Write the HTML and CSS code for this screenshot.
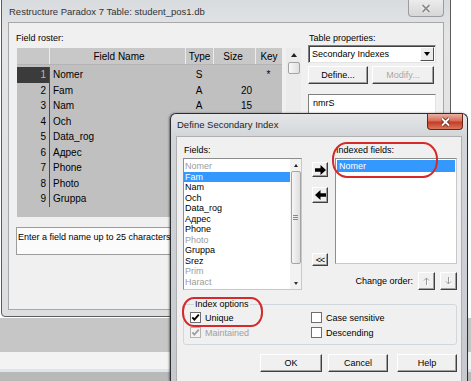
FILE: index.html
```html
<!DOCTYPE html>
<html lang="en">
<head>
    <meta charset="UTF-8">
    <meta name="viewport" content="width=device-width, initial-scale=1.0">
    <title>Restructure Paradox 7 Table</title>
    <link rel="stylesheet" href="styles.css">
</head>
<body>
    <!-- Background window: table restructure -->
    <div class="window back-window">
        <div class="titlebar">
            <span class="title">Restructure Paradox 7 Table: student_pos1.db</span>
            <span class="close inactive">
                <svg width="10" height="9" viewBox="0 0 10 9"><path d="M1.5 1 L8.5 8 M8.5 1 L1.5 8" stroke="#fff" stroke-width="3.2"/><path d="M1.5 1 L8.5 8 M8.5 1 L1.5 8" stroke="#8e8e8e" stroke-width="1.8"/></svg>
            </span>
        </div>
        <div class="client back-client">
            <div class="roster">
                <div class="label">Field roster:</div>
                <div class="grid-wrap">
                    <div class="fgrid">
                        <div class="frow head">
                            <div class="c-num"></div>
                            <div class="c-name">Field Name</div>
                            <div class="c-type">Type</div>
                            <div class="c-size">Size</div>
                            <div class="c-key">Key</div>
                        </div>
                        <!-- rows 4-9: type/size columns sit under the dialog -->
                        <div class="fbody">
                            <div class="frow cur"><div class="c-num">1</div><div class="c-name">Nomer</div><div class="c-type">S</div><div class="c-size"></div><div class="c-key">*</div></div>
                            <div class="frow"><div class="c-num">2</div><div class="c-name">Fam</div><div class="c-type">A</div><div class="c-size">20</div><div class="c-key"></div></div>
                            <div class="frow"><div class="c-num">3</div><div class="c-name">Nam</div><div class="c-type">A</div><div class="c-size">15</div><div class="c-key"></div></div>
                            <div class="frow"><div class="c-num">4</div><div class="c-name">Och</div><div class="c-type"></div><div class="c-size"></div><div class="c-key"></div></div>
                            <div class="frow"><div class="c-num">5</div><div class="c-name">Data_rog</div><div class="c-type"></div><div class="c-size"></div><div class="c-key"></div></div>
                            <div class="frow"><div class="c-num">6</div><div class="c-name">Адрес</div><div class="c-type"></div><div class="c-size"></div><div class="c-key"></div></div>
                            <div class="frow"><div class="c-num">7</div><div class="c-name">Phone</div><div class="c-type"></div><div class="c-size"></div><div class="c-key"></div></div>
                            <div class="frow"><div class="c-num">8</div><div class="c-name">Photo</div><div class="c-type"></div><div class="c-size"></div><div class="c-key"></div></div>
                            <div class="frow"><div class="c-num">9</div><div class="c-name">Gruppa</div><div class="c-type"></div><div class="c-size"></div><div class="c-key"></div></div>
                        </div>
                    </div>
                    <div class="vscroll">
                        <span class="tri-up"></span>
                        <span class="thumb"></span>
                    </div>
                </div>
                <div class="hint">Enter a field name up to 25 characters</div>
            </div>
            <div class="props">
                <div class="label">Table properties:</div>
                <div class="combo">
                    <span class="combo-text">Secondary Indexes</span>
                    <span class="combo-btn"><span class="tri-down"></span></span>
                </div>
                <div class="btn-row">
                    <button class="btn btn-define">Define...</button>
                    <button class="btn btn-modify" disabled>Modify...</button>
                </div>
                <div class="textbox">nmrS</div>
            </div>
        </div>
    </div>

    <!-- Front dialog -->
    <div class="window dialog">
        <div class="titlebar">
            <span class="title">Define Secondary Index</span>
            <span class="close active">
                <svg width="11" height="10" viewBox="0 0 11 10"><path d="M2 1.5 L9 8.5 M9 1.5 L2 8.5" stroke="#5a1a12" stroke-width="3.4"/><path d="M2 1.5 L9 8.5 M9 1.5 L2 8.5" stroke="#fff" stroke-width="1.9"/></svg>
            </span>
        </div>
        <div class="client dlg-client">
            <div class="dlg-top">
                <div class="fields-col">
                    <div class="label">Fields:</div>
                    <div class="listbox fields-list">
                        <ul class="items">
                            <li class="dim">Nomer</li>
                            <li class="sel">Fam</li>
                            <li>Nam</li>
                            <li>Och</li>
                            <li>Data_rog</li>
                            <li>Адрес</li>
                            <li>Phone</li>
                            <li class="dim">Photo</li>
                            <li>Gruppa</li>
                            <li>Srez</li>
                            <li class="dim">Prim</li>
                            <li class="dim">Haract</li>
                        </ul>
                        <div class="lscroll">
                            <span class="tri-up small"></span>
                            <span class="lthumb"><span class="grip"></span></span>
                            <span class="tri-down small"></span>
                        </div>
                    </div>
                </div>
                <div class="movers">
                    <button class="btn mv mv-add">
                        <svg width="11" height="10" viewBox="0 0 11 10"><path d="M0 3.2h5.5V0l5.5 5-5.5 5V6.8H0z" fill="#000"/></svg>
                    </button>
                    <button class="btn mv mv-remove">
                        <svg width="11" height="10" viewBox="0 0 11 10"><path d="M11 3.2H5.5V0L0 5l5.5 5V6.8H11z" fill="#000"/></svg>
                    </button>
                    <button class="btn mv mv-clear">&lt;&lt;</button>
                </div>
                <div class="indexed-col">
                    <div class="label">Indexed fields:</div>
                    <div class="listbox indexed-list">
                        <ul class="items">
                            <li class="sel">Nomer</li>
                        </ul>
                    </div>
                    <div class="order-row">
                        <span>Change order:</span>
                        <button class="btn ord" disabled>
                            <svg width="9" height="11" viewBox="0 0 9 11"><path d="M5.5 10V3 M3 5.5 L5.5 3 L8 5.5" fill="none" stroke="#fff" stroke-width="1"/><path d="M4.5 9V2 M2 4.5 L4.5 2 L7 4.5" fill="none" stroke="#9a9a9a" stroke-width="1"/></svg>
                        </button>
                        <button class="btn ord" disabled>
                            <svg width="9" height="11" viewBox="0 0 9 11"><path d="M5.5 2V9 M3 6.5 L5.5 9 L8 6.5" fill="none" stroke="#fff" stroke-width="1"/><path d="M4.5 1V8 M2 5.5 L4.5 8 L7 5.5" fill="none" stroke="#9a9a9a" stroke-width="1"/></svg>
                        </button>
                    </div>
                </div>
            </div>

            <fieldset class="options">
                <legend>Index options</legend>
                <div class="opt-grid">
                    <label class="check">
                        <span class="box"><svg width="9" height="9" viewBox="0 0 9 9"><path d="M1.3 4.3 L3.4 6.6 L7.8 1.6" fill="none" stroke="#000" stroke-width="1.9"/></svg></span>
                        Unique
                    </label>
                    <label class="check">
                        <span class="box"></span>
                        Case sensitive
                    </label>
                    <label class="check disabled">
                        <span class="box"><svg width="9" height="9" viewBox="0 0 9 9"><path d="M1.3 4.3 L3.4 6.6 L7.8 1.6" fill="none" stroke="#a0a0a0" stroke-width="1.9"/></svg></span>
                        Maintained
                    </label>
                    <label class="check">
                        <span class="box"></span>
                        Descending
                    </label>
                </div>
            </fieldset>

            <div class="dlg-buttons">
                <button class="btn btn-ok">OK</button>
                <button class="btn btn-cancel">Cancel</button>
                <button class="btn btn-help">Help</button>
            </div>
        </div>
    </div>

    <!-- Red hand-drawn highlights -->
    <div class="mark mark-indexed"></div>
    <div class="mark mark-options"></div>
</body>
</html>
```

FILE: styles.css
```css
* {
    box-sizing: border-box;
}

body {
    margin: 0;
    width: 471px;
    height: 381px;
    overflow: hidden;
    position: relative;
    font-family: "Liberation Sans", Arial, sans-serif;
    font-size: 9px;
    color: #000;
    background: linear-gradient(#fff 0 318px, #c6c6c6 318px 352px, #f3f3f3 352px 369px, #dae5ee 369px 372px, #b9b9b9 372px);
}

ul {
    list-style: none;
    margin: 0;
    padding: 0;
}

.label {
    height: 12px;
    line-height: 12px;
    white-space: nowrap;
}

/* windows */
.window {
    position: absolute;
    border: 1px solid #5c5c5c;
    border-radius: 6px 6px 4px 4px;
}

.titlebar {
    display: flex;
    align-items: flex-start;
}

.title {
    font-size: 9.5px;
    white-space: nowrap;
    color: #1e1e1e;
}

.close {
    display: flex;
    align-items: center;
    justify-content: center;
    width: 36px;
    height: 17px;
    margin-left: auto;
    border: 1px solid #9c9c9c;
    border-top: none;
    border-radius: 0 0 4px 4px;
}

.close.inactive {
    background: linear-gradient(#ececec, #d6d6d6);
}

.close.active {
    height: 16px;
    margin-right: -1px;
    border-color: #6b2418;
    background: linear-gradient(#eab2a4, #d66a52 48%, #c23a20 52%, #d8775e);
}

.client {
    background: #f0f0f0;
}

/* back window */
.back-window {
    left: 1px;
    top: -6px;
    width: 450px;
    height: 323px;
    padding: 0 6px 6px;
    background: linear-gradient(#d7dadd, #e3e5e7 40px, #dcdee0);
}

.back-window .titlebar {
    height: 27px;
}

.back-window .title {
    padding: 6px 0 0 1px;
    line-height: 22px;
    color: #333;
}

.back-window .close {
    margin-top: 5px;
}

.back-client {
    height: 288px;
    border: 1px solid #a8a8a8;
    display: flex;
    gap: 6px;
    padding: 9px 0 0 7px;
}

.roster {
    width: 286px;
}

.roster .label {
    margin-bottom: 4px;
}

.grid-wrap {
    display: flex;
    gap: 4px;
    height: 169px;
    margin-left: 1px;
}

.fgrid {
    width: 265px;
    background: #c0c0c0;
    font-size: 10px;
}

.frow {
    display: flex;
    height: 15.5px;
    line-height: 15.5px;
}

.frow.head {
    height: 17px;
    line-height: 17px;
    background: #c8c8c8;
    border-bottom: 1px solid #b4b4b4;
}

.frow.head > div + div {
    border-left: 1px solid #ececec;
    text-align: center;
}

.c-num {
    width: 32px;
    text-align: right;
    padding-right: 3px;
}

.c-name {
    width: 136px;
    padding-left: 3px;
}

.c-type {
    width: 28px;
    text-align: center;
}

.c-size {
    width: 42px;
    text-align: right;
    padding-right: 3px;
}

.c-key {
    width: 27px;
    text-align: center;
}

.fbody {
    padding-top: 2px;
}

.fbody .c-name {
    border-left: 1px solid #4c4c4c;
}

.frow.cur .c-num {
    background: #3b3b3b;
    color: #b8b8b8;
}

.vscroll {
    width: 15px;
    background: #ebebeb;
    display: flex;
    flex-direction: column;
    align-items: center;
    padding: 5px 0 0 1px;
}

.tri-up {
    width: 0;
    height: 0;
    border-left: 3.5px solid transparent;
    border-right: 3.5px solid transparent;
    border-bottom: 4px solid #202020;
}

.tri-down {
    width: 0;
    height: 0;
    border-left: 3.5px solid transparent;
    border-right: 3.5px solid transparent;
    border-top: 4px solid #000;
}

.tri-up.small,
.tri-down.small {
    border-left-width: 2.5px;
    border-right-width: 2.5px;
}

.tri-up.small {
    border-bottom-width: 3px;
}

.tri-down.small {
    border-top-width: 3px;
    border-top-color: #303030;
}

.vscroll .thumb {
    width: 12px;
    height: 12px;
    margin-top: 5px;
    border: 1px solid #a2a2a2;
    border-radius: 2px;
    background: linear-gradient(90deg, #f8f8f8, #e0e0e0);
}

.hint {
    height: 28px;
    margin-top: 10px;
    padding: 3px 1px;
    line-height: 12px;
    background: #fbfbfb;
    border: 1px solid #9c9c9c;
    white-space: nowrap;
}

.props {
    width: 128px;
}

.props .label {
    margin-bottom: 1px;
    padding-left: 1px;
}

.combo {
    display: flex;
    align-items: center;
    height: 18px;
    background: #fff;
    border: 1px solid;
    border-color: #7f7f7f #e3e3e3 #e3e3e3 #7f7f7f;
    box-shadow: inset 1px 1px 0 #404040;
    padding: 1px 1px 1px 3px;
}

.combo-text {
    flex: 1;
}

.combo-btn {
    display: flex;
    align-items: center;
    justify-content: center;
    width: 14px;
    height: 14px;
    background: #ececec;
    border: 1px solid;
    border-color: #fff #505050 #505050 #fff;
}

.btn {
    font-family: inherit;
    font-size: 9px;
    color: #000;
    background: #f0f0f0;
    border: 1px solid;
    border-color: #fff #404040 #404040 #fff;
    box-shadow: inset -1px -1px 0 #a0a0a0;
    padding: 0;
    display: flex;
    align-items: center;
    justify-content: center;
}

.btn:disabled {
    color: #a8a8a8;
}

.btn-row {
    display: flex;
    gap: 4px;
    margin-top: 3px;
}

.btn-row .btn {
    height: 18px;
}

.btn-define {
    width: 60px;
}

.btn-modify {
    width: 62px;
}

.textbox {
    height: 40px;
    margin-top: 10px;
    padding: 2px 4px;
    line-height: 12px;
    background: #fff;
    border: 1px solid;
    border-color: #7f7f7f #e3e3e3 #e3e3e3 #7f7f7f;
}

/* dialog */
.dialog {
    left: 170px;
    top: 113px;
    width: 298px;
    height: 268px;
    padding: 0 5px;
    border-color: #2e2e2e;
    border-bottom: none;
    border-radius: 6px 6px 0 0;
    background: linear-gradient(#e4e6e8, #d3d6d9 22px, #c6c9cd);
    box-shadow: -1px 0 2px rgba(0, 0, 0, 0.45);
}

.dialog .titlebar {
    height: 22px;
}

.dialog .title {
    padding-left: 1px;
    line-height: 22px;
}

.dlg-client {
    height: 245px;
    border: 1px solid #b0b0b0;
    border-bottom: none;
    padding: 7px 4px 0 6px;
}

.dlg-top {
    display: flex;
}

.dlg-top .label {
    margin-bottom: 2px;
    padding-left: 1px;
}

.fields-col {
    width: 119px;
}

.listbox {
    background: #fff;
    border: 1px solid #8d8d8d;
    border-right-color: #c8c8c8;
    border-bottom-color: #c8c8c8;
}

.fields-list {
    display: flex;
    height: 132px;
}

.items {
    flex: 1;
}

.fields-list .items {
    padding-top: 2px;
}

.fields-list li {
    height: 10.5px;
    line-height: 10.5px;
    padding-left: 1px;
    white-space: nowrap;
}

.items li.dim {
    color: #9c9c9c;
}

.items li.sel {
    background: #3399ff;
    color: #fff;
}

.lscroll {
    width: 11px;
    background: #f2f2f2;
    display: flex;
    flex-direction: column;
    align-items: center;
    padding: 5px 0 4px;
}

.lthumb {
    display: flex;
    align-items: center;
    justify-content: center;
    width: 10px;
    height: 93px;
    margin: 4px 0 auto;
    border: 1px solid #a4a4a4;
    border-radius: 2px;
    background: linear-gradient(90deg, #f6f6f6, #dedede);
}

.grip {
    width: 5px;
    height: 5px;
    background: repeating-linear-gradient(#8a8a8a 0 1px, transparent 1px 2px);
}

.movers {
    display: flex;
    flex-direction: column;
    width: 16px;
    margin: 0 7px 0 10px;
}

.mv {
    width: 16px;
}

.mv-add {
    height: 15px;
    margin-top: 18px;
}

.mv-remove {
    height: 16px;
    margin-top: 10px;
}

.mv-clear {
    height: 13px;
    margin-top: 50px;
    letter-spacing: -1px;
}

.indexed-col {
    width: 122px;
}

.indexed-list {
    height: 106px;
    padding: 1px;
}

.indexed-list li {
    height: 12px;
    line-height: 12px;
    padding-left: 2px;
}

.order-row {
    display: flex;
    align-items: center;
    justify-content: flex-end;
    gap: 5px;
    height: 18px;
    margin-top: 8px;
}

.ord {
    width: 17px;
    height: 18px;
}

.options {
    margin: 8px 0 0;
    padding: 0 6px 4px;
    border: 1px solid #d0d8de;
    border-radius: 3px;
}

.options legend {
    margin-left: 4px;
    padding: 0 1px;
    line-height: 12px;
}

.opt-grid {
    display: grid;
    grid-template-columns: 121px auto;
    grid-auto-rows: 15px;
}

.check {
    display: flex;
    align-items: center;
    gap: 4px;
    white-space: nowrap;
}

.check.disabled {
    color: #a0a0a0;
}

.box {
    display: flex;
    align-items: center;
    justify-content: center;
    width: 11px;
    height: 11px;
    background: #fff;
    border: 1px solid #6e6e6e;
}

.check.disabled .box {
    border-color: #b4b4b4;
    background: #f4f4f4;
}

.dlg-buttons {
    display: flex;
    justify-content: flex-end;
    margin-top: 9px;
}

.dlg-buttons .btn {
    height: 18px;
}

.btn-ok {
    width: 62px;
    margin-right: 6px;
}

.btn-cancel {
    width: 60px;
    margin-right: 9px;
}

.btn-help {
    width: 60px;
}

/* red hand-drawn ellipses */
.mark {
    position: absolute;
    border: 2px solid #d62a2a;
}

.mark-indexed {
    left: 332px;
    top: 142px;
    width: 106px;
    height: 36px;
    border-radius: 15px / 17px;
}

.mark-options {
    left: 182px;
    top: 297px;
    width: 81px;
    height: 30px;
    border-radius: 12px / 14px;
}
```
